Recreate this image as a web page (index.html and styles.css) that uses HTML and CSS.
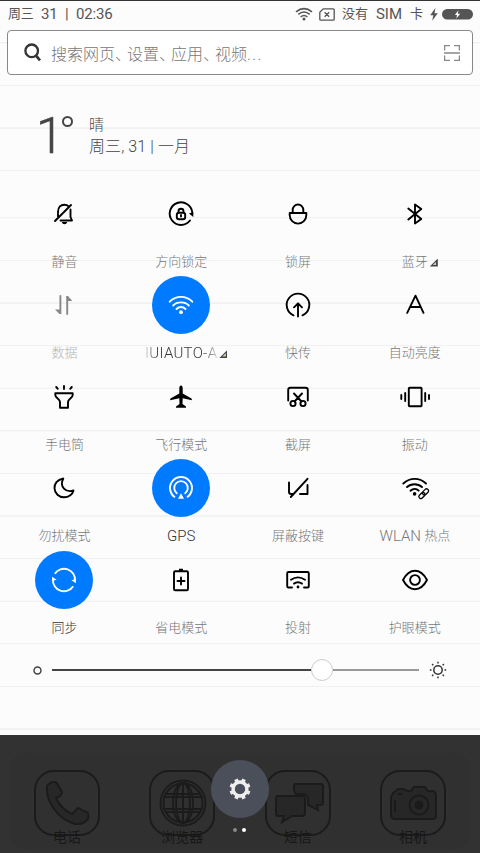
FILE: index.html
```html
<!DOCTYPE html>
<html lang="zh-CN">
<head>
<meta charset="utf-8">
<title>控制中心</title>
<link rel="stylesheet" href="styles.css">
</head>
<body>
<div class="screen">
<header class="status">
  <div class="clock"><span class="cjk">周三</span><span>31</span><span>|</span><span>02:36</span></div>
  <div class="status-right">
    <svg class="s-wifi" width="18" height="14" viewBox="0 0 18 14"><g fill="none" stroke="#555" stroke-width="1.5"><path d="M1 4.9Q9-1.7 17 4.9M3.3 7.4Q9 2.7 14.7 7.4M5.7 9.8Q9 7.1 12.3 9.8"/></g><circle cx="9" cy="12" r="1.5" fill="#555"/></svg>
    <svg class="s-sim" width="16" height="13" viewBox="0 0 16 13"><path d="M4.3.8H14.2Q15.2.8 15.2 1.8V11.2Q15.2 12.2 14.2 12.2H1.8Q.8 12.2.8 11.2V4.2ZM5.6 4.2L10.2 8.8M10.2 4.2L5.6 8.8" fill="none" stroke="#555" stroke-width="1.3"/></svg>
    <div class="sim-text"><span class="cjk">没有</span><span>SIM</span><span class="cjk">卡</span></div>
    <svg class="s-bolt" width="8" height="13" viewBox="0 0 8 13"><path d="M5.4 0L.2 7.2H3.3L2.2 12.8 7.8 5.2H4.6Z" fill="#555"/></svg>
    <svg width="31" height="11" viewBox="0 0 31 11"><rect width="31" height="10.5" rx="5.2" fill="#555"/><path d="M16.4 1.3L12.9 6H15L14.4 9.5 18.2 4.8H15.8Z" fill="#fff"/></svg>
  </div>
</header>
<div class="search">
  <svg width="18" height="19" viewBox="0 0 18 19"><circle cx="7.7" cy="7.8" r="6.3" fill="none" stroke="#333" stroke-width="2.3"/><path d="M11.8 12.4L16 17.3" stroke="#333" stroke-width="2.7"/></svg>
  <span class="search-text">搜索网页<i>、</i>设置<i>、</i>应用<i>、</i>视频<em>...</em></span>
  <svg width="16" height="16" viewBox="0 0 16 16"><path d="M.6 5.5V.6H6M10 .6H15.4V5.5M.6 10.5V15.4H6M10 15.4H15.4V10.5M0 8H16" fill="none" stroke="#888" stroke-width="1.3"/></svg>
</div>
<section class="weather">
  <span class="temp">1</span><span class="degree"></span>
  <div class="weather-info"><div>晴</div><div class="date">周三, 31 | 一月</div></div>
</section>
<main class="tiles">
  <div class="tile"><svg class="icon" viewBox="-29 -29 58 58"><path d="M-6-1V-2C-6-7-3-9.300.3-9.300 2-9.300 3.600-8.700 4.600-7.700M6.500-4.500V3L8 6.500H-3.500M-6 0V2.500M-9 7L7-9"/><path class="fill" d="M-2.300 8H3.300Q2.500 10.300.5 10.300-1.500 10.300-2.300 8Z"/></svg><span>静音</span></div>
  <div class="tile"><svg class="icon" viewBox="-29 -29 58 58"><path d="M9 6.500A11.300 11.300 0 1 1 11.300-1"/><path class="fill" d="M8-.5L12.300-2V3Z"/><rect x="-4.200" y="-1.300" width="8.400" height="6.500" rx="2.300"/><path d="M-2.500-1.500V-2.700A2.500 2.500 0 0 1 2.500-2.700V-1.500M0 1V2.500"/></svg><span>方向锁定</span></div>
  <div class="tile"><svg class="icon" viewBox="-29 -29 58 58"><path d="M-5.300-1V-4.200A5.300 5.300 0 0 1 5.300-4.200V-1M-8.300-1H8.300V1.300A8.300 8.300 0 0 1-8.300 1.300Z"/></svg><span>锁屏</span></div>
  <div class="tile"><svg class="icon" viewBox="-29 -29 58 58"><path d="M-6.700-5.500L6.300 5 0 9.500V-9.500L6.300-5-6.700 5.500"/></svg><span>蓝牙<i class="more"></i></span></div>

  <div class="tile disabled"><svg class="icon" viewBox="-29 -29 58 58"><path d="M-3.600-9V8M3.200-8V9"/><path class="fill" d="M-2.700 9H-4.500L-9 4.500H-3.500ZM2.300-9H4L8.300-4H3Z"/></svg><span>数据</span></div>
  <div class="tile on"><svg class="icon" viewBox="-29 -29 58 58"><path d="M-11.300-3.300C-5-9.700 5-9.700 11.300-3.300M-7.800.5C-4-3.700 4-3.700 7.800.5M-4.500 4C-2 1.300 2 1.300 4.500 4"/><circle class="fill" cy="7.200" r="1.900"/></svg><span class="latin"><b class="ssid">IUIAUTO-A</b><i class="more"></i></span></div>
  <div class="tile"><svg class="icon" viewBox="-29 -29 58 58"><path d="M-4.500 10.300A11.300 11.300 0 1 1 4.500 10.300M0 11.500V-1M-4 2.300L0-1.700 4 2.300"/></svg><span>快传</span></div>
  <div class="tile"><svg class="icon" viewBox="-29 -29 58 58"><path d="M-7.800 7.800L.5-9.300 8.500 7.800M-5 2H5.500"/></svg><span>自动亮度</span></div>

  <div class="tile"><svg class="icon" viewBox="-29 -29 58 58"><path d="M-8.700-3.700H8.700V-2C8.700 1 4 2 4 5V10.700H-4V5C-4 2-8.700 1-8.700-2ZM0-11V-8M-7.800-10L-6.200-8.200M7.800-10L6.200-8.200"/></svg><span>手电筒</span></div>
  <div class="tile"><svg class="icon" viewBox="-29 -29 58 58"><path class="fill" d="M0-11.500C1.300-11.500 1.700-10 1.700-8.500V-3.500L10.500 1.500Q11 2 10.800 3.300L1.700 1.300 1.500 7 5 9.500V10.700H-5V9.500L-1.500 7-1.700 1.300-10.800 3.300Q-11 2-10.500 1.500L-1.700-3.500V-8.500C-1.700-10-1.300-11.500 0-11.500Z"/></svg><span>飞行模式</span></div>
  <div class="tile"><svg class="icon" viewBox="-29 -29 58 58"><path d="M-9.800 3.500V-7Q-9.800-9.300-7.500-9.300H7.500Q9.800-9.300 9.800-7V3.500M-4-3.500L3.500 4.500M4-3.500L-3.500 4.500"/><circle cx="-5" cy="6.500" r="2.600"/><circle cx="5" cy="6.500" r="2.600"/></svg><span>截屏</span></div>
  <div class="tile"><svg class="icon" viewBox="-29 -29 58 58"><rect x="-6.200" y="-9.200" width="12.800" height="18.400" rx=".8"/><path d="M-9.800-4V4M10.200-4V4M-13.700-2V2M14-2V2"/></svg><span>振动</span></div>

  <div class="tile"><svg class="icon" viewBox="-29 -29 58 58"><path d="M-.7-9.500C-7-8.500-9.700-4-9.500.2-9.300 5.500-5 9.300 0 9.300 5 9.300 8.700 6 9.500 2.500 2 5-5-1-.7-9.500Z"/></svg><span>勿扰模式</span></div>
  <div class="tile on"><svg class="icon" viewBox="-29 -29 58 58"><path class="butt" d="M-6 9.200A11 11 0 1 1 6 9.200M-3.600 5.700A6.800 6.800 0 1 1 3.600 5.700"/><path class="fill" d="M0 5.200L3 10.800H-3Z"/></svg><span class="latin">GPS</span></div>
  <div class="tile"><svg class="icon" viewBox="-29 -29 58 58"><path d="M-9-5.500V4Q-9 6-6.800 6H-5.500M2 6H9.500V-3M-7.200 9L9.500-9.200"/></svg><span>屏蔽按键</span></div>
  <div class="tile"><svg class="icon" viewBox="-29 -29 58 58"><path d="M-11.700-4.500C-5-10.700 4.500-10.700 11-4.500M-8-1C-4-4.700 3-4.700 7-1M-4.500 2.700C-2 .5 1.500.5 3.700 2.700"/><circle class="fill" cx="-.4" cy="5.900" r="1.800"/><g class="thin" transform="translate(8.700 5.700) rotate(-45)"><rect x="-6" y="-2" width="7" height="4" rx="1.900"/><rect x="-1" y="-2" width="7" height="4" rx="1.900"/></g></svg><span><b class="latin">WLAN</b>&nbsp;热点</span></div>

  <div class="tile on"><svg class="icon" viewBox="-29 -29 58 58"><path class="butt" d="M-9.200-6.200A11 11 0 0 1 11 .8M9.200 6.200A11 11 0 0 1-11-.8"/><path class="fill" d="M7.300.3L12-1V3.300ZM-7.300-.3L-12 1V-3.300Z"/></svg><span>同步</span></div>
  <div class="tile"><svg class="icon" viewBox="-29 -29 58 58"><rect x="-7" y="-8.700" width="14" height="19" rx="1.300"/><path d="M-3.500 1H3.500M0-2.500V4.500"/><path class="fill" d="M-2-11.300H2V-8H-2Z"/></svg><span>省电模式</span></div>
  <div class="tile"><svg class="icon" viewBox="-29 -29 58 58"><path d="M-6 7.500H-9.500Q-10.800 7.500-10.800 6.200V-6.700Q-10.800-8-9.500-8H9.500Q10.800-8 10.800-6.700V6.200Q10.800 7.500 9.500 7.500H6M-7-.2Q0-5 7-.2M-4 3.600Q0 .8 4 3.600"/><circle class="fill" cy="7" r="1.400"/></svg><span>投射</span></div>
  <div class="tile"><svg class="icon" viewBox="-29 -29 58 58"><path d="M-12 0C-9-5.700-5-9.200 0-9.200S9-5.700 12 0C9 5.700 5 9.200 0 9.200S-9 5.700-12 0Z"/><circle r="4.900"/></svg><span>护眼模式</span></div>
</main>
<div class="brightness">
  <svg width="9" height="9" viewBox="0 0 9 9"><circle cx="4.500" cy="4.500" r="3.500" fill="none" stroke="#444" stroke-width="1.500"/></svg>
  <div class="track"><div class="level"></div><div class="knob"></div><div class="rest"></div></div>
  <svg width="18" height="18" viewBox="-9 -9 18 18"><circle r="4.200" fill="none" stroke="#333" stroke-width="1.500"/><path d="M0-8.200V-6.500M0 6.500V8.200M-8.200 0H-6.500M6.500 0H8.200M-5.900-5.900L-4.700-4.700M4.700 4.700L5.900 5.900M-5.900 5.900L-4.700 4.700M4.700-4.700L5.900-5.900" stroke="#333" stroke-width="1.500"/></svg>
</div>
<footer class="dock">
  <div class="dock-plate">
    <div class="app"><svg viewBox="0 0 66 66"><rect class="frame" x="1" y="1" width="64" height="64" rx="19"/><path class="shape" d="M13 16Q17 11 21 12Q23 12 24 15L28 22Q28 26 22 28 27 39 38 44L44 38 54 43Q56 48 52 51 46 56 38 53C24 48 11 31 13 16Z"/></svg><span>电话</span></div>
    <div class="app"><svg viewBox="0 0 66 66"><rect class="frame" x="1" y="1" width="64" height="64" rx="19"/><g class="frame"><circle cx="34" cy="33" r="22.500"/><circle cx="34" cy="33" r="19.500"/><ellipse cx="34" cy="33" rx="10" ry="20"/><ellipse cx="34" cy="33" rx="7" ry="20"/><path d="M34 12V54M14 27H54M14 39H54M17 24H51M17 42H51"/></g></svg><span>浏览器</span></div>
    <div class="app"><svg viewBox="0 0 66 66"><rect class="frame" x="1" y="1" width="64" height="64" rx="19"/><path class="shape" d="M30 14H56Q58 14 58 16V33Q58 35 55 35H52L53 40 43 35V28Q42 24 37 24H31Q29 23 29 20V16Q29 14 30 14Z"/><path class="shape" d="M13 26H37Q40 26 40 29V43Q40 46 37 46H27L17 52 19 46H13Q11 46 11 43V29Q11 26 13 26Z"/></svg><span>短信</span></div>
    <div class="app"><svg viewBox="0 0 66 66"><rect class="frame" x="1" y="1" width="64" height="64" rx="19"/><path class="shape" d="M13 23L18 19H24L27 21H31L34 17H45L48 21H53Q56 22 56 26V46Q56 49 52 49H15Q11 49 11 45V27ZM15 30V42M18 24H22"/><circle class="shape" cx="39" cy="35" r="9.500"/><circle class="core" cx="39" cy="35" r="4.500"/></svg><span>相机</span></div>
  </div>
  <div class="settings"><svg width="24" height="24" viewBox="-12 -12 24 24"><g transform="rotate(22.500)" fill="none" stroke="#eee"><circle r="6.900" stroke-width="3.400"/><path d="M0-10.500V-7M0 7V10.500M-10.500 0H-7M7 0H10.500M-7.400-7.400L-5-5M5 5L7.400 7.400M-7.400 7.400L-5 5M5-5L7.400-7.400" stroke-width="3.700"/></g></svg></div>
  <div class="dots"><i></i><i class="current"></i></div>
</footer>
</div>
</body>
</html>
```

FILE: styles.css
```css
* { box-sizing: border-box; }
body { margin: 0; font-family: Roboto, "Noto Sans CJK SC", sans-serif; font-weight: 300; }
.screen {
  width: 480px; height: 853px; overflow: hidden; display: flex; flex-direction: column;
  border-top: 1px solid #333;
  background-color: #fcfcfc;
  background-image:
    repeating-linear-gradient(to bottom, transparent 0, transparent 41px, #f1f1f1 41.400px, #f1f1f1 42.300px, transparent 42.600px),
    repeating-linear-gradient(to bottom, transparent 0, transparent 41px, #f1f1f1 41.400px, #f1f1f1 42.300px, transparent 42.600px);
  background-size: 480px 175px, 480px 680px;
  background-position: 0 0, 0 175px;
  background-repeat: no-repeat;
}
.status { height: 26px; padding: 0 7px 0 8px; display: flex; align-items: center; justify-content: space-between; font-size: 15px; font-weight: 400; color: #555; }
.clock, .sim-text { display: flex; align-items: center; line-height: 20px; }
.clock { gap: 7.500px; letter-spacing: -.2px; }
.sim-text { gap: 8px; }
.cjk { font-size: 13px; }
.status-right { display: flex; align-items: center; }
.s-sim { margin: 0 7px 0 6px; }
.s-bolt { margin: 0 4px 0 7px; }
.search { height: 45px; margin: 3px 7px 0; padding: 0 12px 0 16px; display: flex; align-items: center; border: 1px solid #888; border-radius: 4px; background: #fff; }
.search-text { flex: 1; margin-left: 9px; font-size: 16px; color: #777; }
.search-text i { font-style: normal; letter-spacing: -4px; }
.search-text em { font-style: normal; letter-spacing: 1.400px; }
.weather { height: 108px; padding: 39px 0 0 36px; display: flex; align-items: flex-start; color: #444; }
.temp { width: 21px; font-size: 50px; line-height: 44px; -webkit-text-stroke: .6px #444; }
.degree { width: 11px; height: 11px; margin: 2px 16px 0 5px; border: 2.500px solid #444; border-radius: 50%; }
.weather-info { font-size: 15px; line-height: 22px; }
.date { font-size: 16px; white-space: nowrap; letter-spacing: .1px; }
.tiles { height: 458px; margin: 1.500px 6px 0 6px; display: grid; grid-template-columns: repeat(4, 116.800px); grid-auto-rows: 91.600px; }
.tile { display: flex; flex-direction: column; align-items: center; color: #000; }
.tile > span { position: relative; display: flex; align-items: center; height: 20px; margin-top: 9px; font-size: 13px; line-height: 20px; color: #777; white-space: nowrap; }
.tile .latin { font-size: 15px; font-weight: 300; }
.icon { display: block; width: 58px; height: 58px; border-radius: 50%; fill: none; stroke: currentColor; stroke-width: 1.900; stroke-linecap: round; stroke-linejoin: round; }
.icon .fill { fill: currentColor; stroke: none; }
.icon .thin { stroke-width: 1.300; }
.icon .butt { stroke-linecap: butt; }
.on .icon { background: #007aff; color: #fff; }
.tile.on > span { color: #333; }
.disabled { color: #888; }
.tile.disabled > span { color: #b5b5b5; }
.more { position: absolute; left: calc(100% + 2px); top: 7px; width: 8px; height: 8px; background: #444; clip-path: polygon(100% 0, 100% 100%, 0 100%); }
.more::after { content: ""; position: absolute; right: 1.500px; bottom: 1.500px; width: 3.500px; height: 3.500px; background: #d8ccaa; clip-path: polygon(100% 0, 100% 100%, 0 100%); }
.ssid { font-weight: 300; letter-spacing: .3px; background: linear-gradient(to right, #ddd, #333 14%, #333 80%, #ccc); -webkit-background-clip: text; color: transparent; }
.brightness { height: 50px; padding: 5px 33px 0; display: flex; align-items: center; }
.track { flex: 1; margin: 0 10px; display: flex; align-items: center; }
.level { width: 259px; height: 2px; background: #444; }
.knob { width: 22px; height: 22px; border: 1px solid #ccc; border-radius: 50%; background: #fff; }
.rest { flex: 1; height: 2px; background: #999; }
.dock { position: relative; height: 118px; margin-top: auto; padding: 18px 9px 0; background: #323232; }
.dock-plate { height: 96px; padding: 17px 25px 0; display: flex; justify-content: space-between; border-radius: 18px; background: #303030; }
.app { width: 66px; display: flex; flex-direction: column; align-items: center; font-size: 14px; font-weight: 400; color: #171717; }
.app svg { width: 66px; height: 66px; flex: none; }
.app span { margin-top: -9px; line-height: 20px; white-space: nowrap; }
.frame { fill: none; stroke: #1b1b1b; stroke-width: 1.900; }
.shape { fill: #272727; stroke: #1b1b1b; stroke-width: 1.900; }
.core { fill: #1b1b1b; }
.settings { position: absolute; left: 211px; top: 25px; width: 58px; height: 58px; border-radius: 50%; background: #4b4f5a; display: flex; align-items: center; justify-content: center; }
.dots { position: absolute; left: 233px; top: 93px; display: flex; gap: 5px; }
.dots i { width: 4px; height: 4px; border-radius: 50%; background: #888; }
.dots .current { background: #fff; }
```
